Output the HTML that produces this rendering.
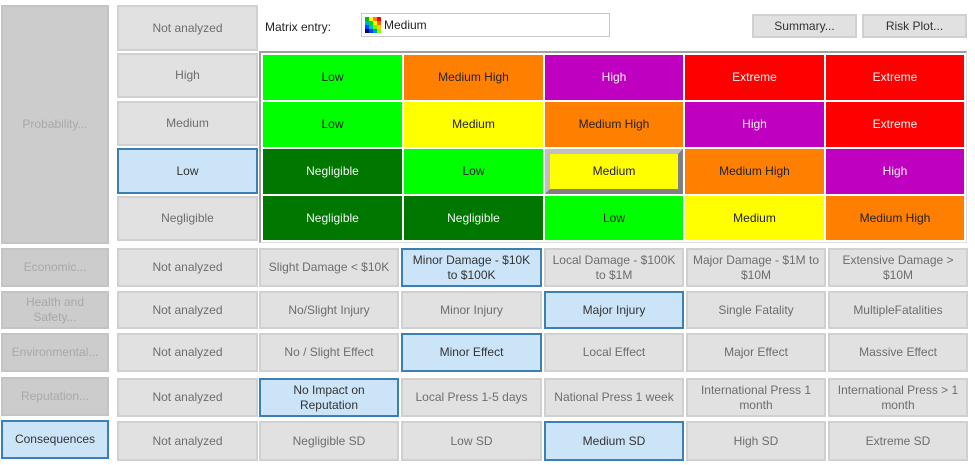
<!DOCTYPE html>
<html><head><meta charset="utf-8"><style>
*{box-sizing:border-box;margin:0;padding:0}
body{width:975px;height:465px;background:#fff;position:relative;overflow:hidden;font-family:"Liberation Sans",sans-serif;font-size:12px}
.b{position:absolute;display:flex;align-items:center;justify-content:center;text-align:center;line-height:15px}
.g{background:#e1e1e1;border:2px solid #d0d0d0;color:#6d6d6d}
.l{background:#cccccc;border:2px solid #c4c4c4;color:#a8a8a8}
.s{background:#cce4f7;border:2px solid #3c7fb1;color:#333}
.c{color:#222}
.w{color:#f4f4f4}
.gr{background:#00ff00}.og{background:#ff8000}.pu{background:#c000c0}.re{background:#ff0000}.ye{background:#ffff00}.dg{background:#007800}
</style></head><body>
<!-- left column -->
<div class="b l" style="left:1px;top:5px;width:108px;height:239px">Probability...</div>
<div class="b l" style="left:1px;top:248px;width:108px;height:39px">Economic...</div>
<div class="b l" style="left:1px;top:291px;width:108px;height:38px">Health and<br>Safety...</div>
<div class="b l" style="left:1px;top:333px;width:108px;height:39px">Environmental...</div>
<div class="b l" style="left:1px;top:377px;width:108px;height:39px">Reputation...</div>
<div class="b s" style="left:1px;top:420px;width:108px;height:39px">Consequences</div>
<!-- probability levels -->
<div class="b g" style="left:117px;top:5px;width:141px;height:46px">Not analyzed</div>
<div class="b g" style="left:117px;top:53px;width:141px;height:45px">High</div>
<div class="b g" style="left:117px;top:101px;width:141px;height:45px">Medium</div>
<div class="b s" style="left:117px;top:148px;width:141px;height:46px">Low</div>
<div class="b g" style="left:117px;top:196px;width:141px;height:45px">Negligible</div>
<!-- header -->
<div style="position:absolute;left:265px;top:20px;color:#222">Matrix entry:</div>
<div style="position:absolute;left:361px;top:13px;width:249px;height:24px;border:1px solid #c8c8c8;background:#fff">
 <div style="position:absolute;left:3px;top:3px;width:16px;height:16px;display:grid;grid-template-columns:repeat(4,4px)">
  <i style="background:#00c000"></i><i style="background:#ffff00"></i><i style="background:#ff8000"></i><i style="background:#ff0000"></i>
  <i style="background:#00a0ff"></i><i style="background:#00e000"></i><i style="background:#ffff00"></i><i style="background:#ff6000"></i>
  <i style="background:#0040ff"></i><i style="background:#00c0c0"></i><i style="background:#60ff00"></i><i style="background:#ffd000"></i>
  <i style="background:#000080"></i><i style="background:#0040ff"></i><i style="background:#00a0a0"></i><i style="background:#80ff00"></i>
 </div>
 <span style="position:absolute;left:22px;top:4px;color:#222">Medium</span>
</div>
<div class="b g" style="left:752px;top:14px;width:105px;height:24px;color:#333">Summary...</div>
<div class="b g" style="left:862px;top:14px;width:105px;height:24px;color:#333">Risk Plot...</div>
<!-- matrix -->
<div style="position:absolute;left:259px;top:51px;width:708px;height:192px;border-top:2px solid #a0a0a0;border-left:2px solid #a0a0a0;border-right:1px solid #e0e0e0;border-bottom:1px solid #e0e0e0;background:#fff"></div>
<div class="b gr c" style="left:263px;top:55px;width:139px;height:45px">Low</div>
<div class="b og c" style="left:404px;top:55px;width:139px;height:45px">Medium High</div>
<div class="b pu w" style="left:545px;top:55px;width:138px;height:45px">High</div>
<div class="b re w" style="left:685px;top:55px;width:139px;height:45px">Extreme</div>
<div class="b re w" style="left:826px;top:55px;width:138px;height:45px">Extreme</div>

<div class="b gr c" style="left:263px;top:102px;width:139px;height:45px">Low</div>
<div class="b ye c" style="left:404px;top:102px;width:139px;height:45px">Medium</div>
<div class="b og c" style="left:545px;top:102px;width:138px;height:45px">Medium High</div>
<div class="b pu w" style="left:685px;top:102px;width:139px;height:45px">High</div>
<div class="b re w" style="left:826px;top:102px;width:138px;height:45px">Extreme</div>

<div class="b dg w" style="left:263px;top:149px;width:139px;height:45px">Negligible</div>
<div class="b gr c" style="left:404px;top:149px;width:139px;height:45px">Low</div>
<div class="b ye c" style="left:545px;top:149px;width:138px;height:45px;border-top:5px solid #c0c0c0;border-left:5px solid #c0c0c0;border-right:5px solid #808080;border-bottom:5px solid #808080">Medium</div>
<div class="b og c" style="left:685px;top:149px;width:139px;height:45px">Medium High</div>
<div class="b pu w" style="left:826px;top:149px;width:138px;height:45px">High</div>

<div class="b dg w" style="left:263px;top:196px;width:139px;height:44px">Negligible</div>
<div class="b dg w" style="left:404px;top:196px;width:139px;height:44px">Negligible</div>
<div class="b gr c" style="left:545px;top:196px;width:138px;height:44px">Low</div>
<div class="b ye c" style="left:685px;top:196px;width:139px;height:44px">Medium</div>
<div class="b og c" style="left:826px;top:196px;width:138px;height:44px">Medium High</div>
<!-- consequence rows -->
<div class="b g" style="left:117px;top:248px;width:141px;height:39px">Not analyzed</div>
<div class="b g" style="left:259px;top:248px;width:140px;height:39px">Slight Damage &lt; $10K</div>
<div class="b s" style="left:401px;top:248px;width:141px;height:39px">Minor Damage - $10K<br>to $100K</div>
<div class="b g" style="left:544px;top:248px;width:140px;height:39px">Local Damage - $100K<br>to $1M</div>
<div class="b g" style="left:686px;top:248px;width:140px;height:39px">Major Damage - $1M to<br>$10M</div>
<div class="b g" style="left:828px;top:248px;width:140px;height:39px">Extensive Damage &gt;<br>$10M</div>

<div class="b g" style="left:117px;top:291px;width:141px;height:38px">Not analyzed</div>
<div class="b g" style="left:259px;top:291px;width:140px;height:38px">No/Slight Injury</div>
<div class="b g" style="left:401px;top:291px;width:141px;height:38px">Minor Injury</div>
<div class="b s" style="left:544px;top:291px;width:140px;height:38px">Major Injury</div>
<div class="b g" style="left:686px;top:291px;width:140px;height:38px">Single Fatality</div>
<div class="b g" style="left:828px;top:291px;width:140px;height:38px">MultipleFatalities</div>

<div class="b g" style="left:117px;top:333px;width:141px;height:39px">Not analyzed</div>
<div class="b g" style="left:259px;top:333px;width:140px;height:39px">No / Slight Effect</div>
<div class="b s" style="left:401px;top:333px;width:141px;height:39px">Minor Effect</div>
<div class="b g" style="left:544px;top:333px;width:140px;height:39px">Local Effect</div>
<div class="b g" style="left:686px;top:333px;width:140px;height:39px">Major Effect</div>
<div class="b g" style="left:828px;top:333px;width:140px;height:39px">Massive Effect</div>

<div class="b g" style="left:117px;top:378px;width:141px;height:39px">Not analyzed</div>
<div class="b s" style="left:259px;top:378px;width:140px;height:39px">No Impact on<br>Reputation</div>
<div class="b g" style="left:401px;top:378px;width:141px;height:39px">Local Press 1-5 days</div>
<div class="b g" style="left:544px;top:378px;width:140px;height:39px">National Press 1 week</div>
<div class="b g" style="left:686px;top:378px;width:140px;height:39px">International Press 1<br>month</div>
<div class="b g" style="left:828px;top:378px;width:140px;height:39px">International Press &gt; 1<br>month</div>

<div class="b g" style="left:117px;top:421px;width:141px;height:40px">Not analyzed</div>
<div class="b g" style="left:259px;top:421px;width:140px;height:40px">Negligible SD</div>
<div class="b g" style="left:401px;top:421px;width:141px;height:40px">Low SD</div>
<div class="b s" style="left:544px;top:421px;width:140px;height:40px">Medium SD</div>
<div class="b g" style="left:686px;top:421px;width:140px;height:40px">High SD</div>
<div class="b g" style="left:828px;top:421px;width:140px;height:40px">Extreme SD</div>
</body></html>
